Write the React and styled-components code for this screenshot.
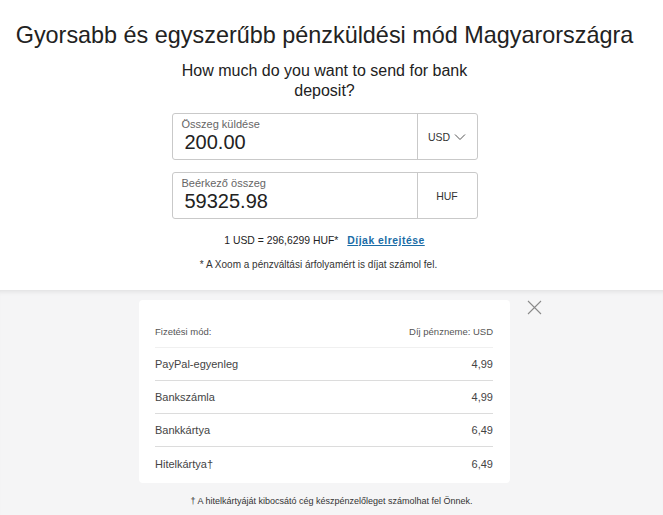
import styled, { createGlobalStyle } from "styled-components";

const GlobalStyle = createGlobalStyle`
  html, body {
    margin: 0;
    padding: 0;
    background: #f5f5f6;
    font-family: "Liberation Sans", Arial, sans-serif;
  }
`;

const Page = styled.div`
  min-height: 100vh;
  display: flex;
  flex-direction: column;
`;

const Top = styled.section`
  background: #fff;
  height: 290px;
  box-sizing: border-box;
  padding: 22px 14px 0 0;
  display: flex;
  flex-direction: column;
  align-items: center;
`;

const Title = styled.h1`
  margin: 0;
  font-size: 23.4px;
  line-height: 26px;
  font-weight: 400;
  color: #222;
  white-space: nowrap;
`;

const Subtitle = styled.p`
  margin: 13px 0 0;
  width: 300px;
  text-align: center;
  font-size: 16px;
  line-height: 20px;
  color: #222;
`;

const Field = styled.div`
  margin-top: ${(p) => p.$gap}px;
  width: 306px;
  height: 47px;
  box-sizing: border-box;
  border: 1px solid #c9c9c9;
  border-radius: 3px;
  display: flex;
`;

const FieldMain = styled.div`
  flex: 1;
  padding: 4px 0 0 9px;
  display: flex;
  flex-direction: column;
`;

const FieldLabel = styled.span`
  font-size: 11px;
  line-height: 13px;
  color: #666;
`;

const FieldValue = styled.span`
  font-size: 20px;
  line-height: 22px;
  color: #222;
  padding-left: 3px;
`;

const Currency = styled.div`
  width: 59px;
  border-left: 1px solid #c9c9c9;
  display: flex;
  align-items: center;
  justify-content: center;
  gap: 4px;
  font-size: 10.5px;
  color: #333;
`;

const Rate = styled.div`
  margin-top: 15px;
  font-size: 10.4px;
  line-height: 14px;
  color: #222;
`;

const FeeLink = styled.a`
  margin-left: 9px;
  color: #1a6ca6;
  font-weight: 700;
  letter-spacing: 0.5px;
  text-decoration: underline;
  cursor: pointer;
`;

const Note = styled.p`
  margin: 11px 12px 0 0;
  font-size: 10px;
  line-height: 12px;
  color: #333;
`;

const Bottom = styled.section`
  flex: 1;
  box-shadow: inset 0 5px 4px -3px rgba(0, 0, 0, 0.08);
  padding-top: 10px;
  display: flex;
  flex-direction: column;
`;

const CardRow = styled.div`
  display: flex;
  align-items: flex-start;
  padding-left: 139px;
`;

const Card = styled.div`
  width: 371px;
  box-sizing: border-box;
  background: #fff;
  border-radius: 4px;
  padding: 15px 17px 3px 16px;
`;

const Row = styled.div`
  height: 33px;
  box-sizing: border-box;
  display: flex;
  align-items: center;
  justify-content: space-between;
  border-bottom: 1px solid ${(p) => (p.$head ? "#f0f0f0" : "#dcdcdc")};
  font-size: ${(p) => (p.$head ? "9.5px" : "11px")};
  color: ${(p) => (p.$head ? "#555" : "#444")};

  &:last-child {
    border-bottom: none;
  }
`;

const Close = styled.button`
  margin-left: 17px;
  padding: 0;
  border: none;
  background: none;
  width: 15px;
  height: 15px;
  display: flex;
`;

const Footnote = styled.p`
  margin: 12px 0 0;
  text-align: center;
  font-size: 9px;
  line-height: 12px;
  color: #333;
`;

const fees = [
  ["PayPal-egyenleg", "4,99"],
  ["Bankszámla", "4,99"],
  ["Bankkártya", "6,49"],
  ["Hitelkártya†", "6,49"],
];

export default function App() {
  return (
    <Page>
      <GlobalStyle />
      <Top>
        <Title>Gyorsabb és egyszerűbb pénzküldési mód Magyarországra</Title>
        <Subtitle>How much do you want to send for bank deposit?</Subtitle>
        <Field $gap={12}>
          <FieldMain>
            <FieldLabel>Összeg küldése</FieldLabel>
            <FieldValue>200.00</FieldValue>
          </FieldMain>
          <Currency>
            USD
            <svg width="12" height="8" viewBox="0 0 12 8">
              <path d="M1 1.5 L6 6.5 L11 1.5" fill="none" stroke="#555" strokeWidth="1" />
            </svg>
          </Currency>
        </Field>
        <Field $gap={12}>
          <FieldMain>
            <FieldLabel>Beérkező összeg</FieldLabel>
            <FieldValue>59325.98</FieldValue>
          </FieldMain>
          <Currency>HUF</Currency>
        </Field>
        <Rate>
          1 USD = 296,6299 HUF*
          <FeeLink>Díjak elrejtése</FeeLink>
        </Rate>
        <Note>* A Xoom a pénzváltási árfolyamért is díjat számol fel.</Note>
      </Top>
      <Bottom>
        <CardRow>
          <Card>
            <Row $head>
              <span>Fizetési mód:</span>
              <span>Díj pénzneme: USD</span>
            </Row>
            {fees.map(([name, fee]) => (
              <Row key={name}>
                <span>{name}</span>
                <span>{fee}</span>
              </Row>
            ))}
          </Card>
          <Close aria-label="Bezárás">
            <svg width="15" height="15" viewBox="0 0 15 15">
              <path d="M1 1 L14 14 M14 1 L1 14" stroke="#8a8a8a" strokeWidth="1.1" />
            </svg>
          </Close>
        </CardRow>
        <Footnote>† A hitelkártyáját kibocsátó cég készpénzelőleget számolhat fel Önnek.</Footnote>
      </Bottom>
    </Page>
  );
}
